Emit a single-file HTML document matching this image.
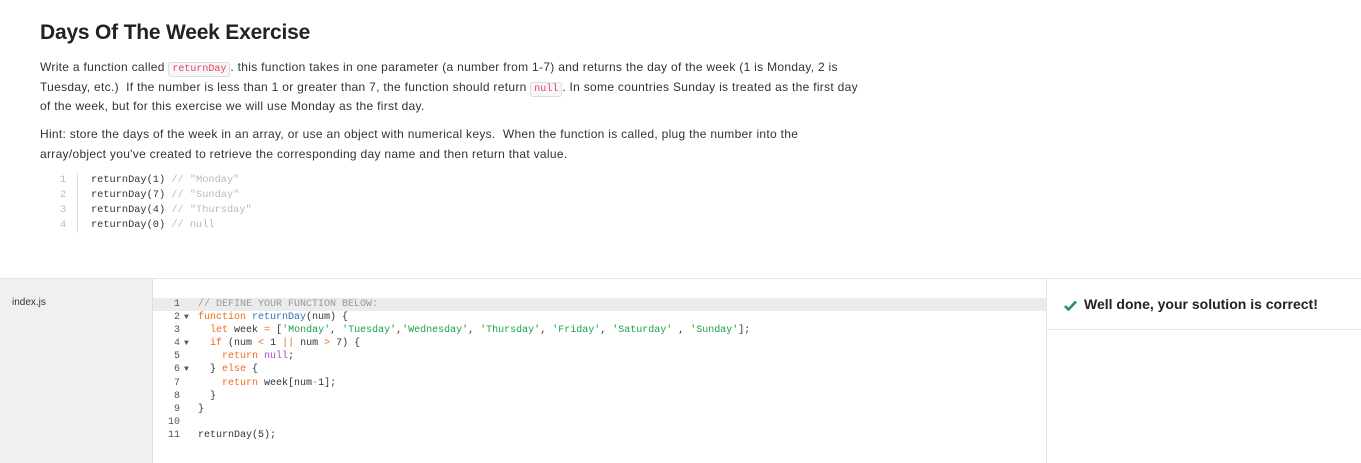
<!DOCTYPE html>
<html><head><style>
body{margin:0;width:1361px;height:462px;background:#fff;font-family:"Liberation Sans",sans-serif;color:#333;overflow:hidden;position:relative}
h1{position:absolute;left:40px;top:21px;margin:0;font-size:21px;font-weight:bold;color:#222;letter-spacing:-0.2px}
.p{position:absolute;left:40px;font-size:12px;line-height:19.5px;width:900px;white-space:nowrap;color:#333;letter-spacing:0.3px}
code.i{font-family:"Liberation Mono",monospace;font-size:10px;line-height:10px;color:#e83e5c;background:#f7f7f9;border:1px solid #ddd;border-radius:3px;padding:1px 3px;letter-spacing:0}
.ex{position:absolute;left:54px;top:173px;font-family:"Liberation Mono",monospace;font-size:10.3px;line-height:15px;color:#333}
.ex .n{display:inline-block;width:24px;color:#bbb;border-right:1px solid #ddd;margin-right:13px;text-align:left;padding-left:6px;box-sizing:border-box}
.c{color:#bbb}
.bot{position:absolute;left:0;top:278px;width:1361px;height:184px;border-top:1px solid #e5e5e5}
.left{position:absolute;left:0;top:0;width:152px;height:184px;background:#eff0f2;border-right:1px solid #e0e0e0}
.left span{position:absolute;left:12px;top:18px;font-size:10px;color:#333}
.ed{position:absolute;left:153px;top:19px;width:893px;font-family:"Liberation Mono",monospace;font-size:10px;line-height:13.1px;color:#333}
.ed div{white-space:pre;height:13.1px}
.ed .ln{display:inline-block;width:45px;text-align:right;color:#555;padding-right:18px;box-sizing:border-box;position:relative}
.ed .ln i{position:absolute;left:31px;top:0;font-style:normal;font-size:8px;color:#555}
.ed .hl{background:#ebebeb}
.k{color:#f26b1d}.f{color:#2f6fb5}.s{color:#1aa34a}.nl{color:#b146c2}.cm{color:#999}
.right{position:absolute;left:1046px;top:0;width:315px;height:184px;border-left:1px solid #e5e5e5}
.msg{position:absolute;left:0;top:0;width:315px;height:50px;border-bottom:1px solid #e5e5e5;font-weight:bold;font-size:14px;color:#222}
.msg span{position:absolute;left:37px;top:17px}
</style></head><body>
<h1>Days Of The Week Exercise</h1>
<div class="p" style="top:58px">Write a function called <code class="i">returnDay</code>. this function takes in one parameter (a number from 1-7) and returns the day of the week (1 is Monday, 2 is<br>Tuesday, etc.)&nbsp; If the number is less than 1 or greater than 7, the function should return <code class="i">null</code>. In some countries Sunday is treated as the first day<br>of the week, but for this exercise we will use Monday as the first day.</div>
<div class="p" style="top:125px">Hint: store the days of the week in an array, or use an object with numerical keys.&nbsp; When the function is called, plug the number into the<br>array/object you've created to retrieve the corresponding day name and then return that value.</div>
<div class="ex">
<div><span class="n">1</span>returnDay(1) <span class="c">// "Monday"</span></div>
<div><span class="n">2</span>returnDay(7) <span class="c">// "Sunday"</span></div>
<div><span class="n">3</span>returnDay(4) <span class="c">// "Thursday"</span></div>
<div><span class="n">4</span>returnDay(0) <span class="c">// null</span></div>
</div>
<div class="bot">
<div class="left"><span>index.js</span></div>
<div class="ed">
<div class="hl"><span class="ln">1</span><span class="cm">// DEFINE YOUR FUNCTION BELOW:</span></div>
<div><span class="ln">2<i>▼</i></span><span class="k">function</span> <span class="f">returnDay</span>(num) {</div>
<div><span class="ln">3</span>  <span class="k">let</span> week <span class="k">=</span> [<span class="s">'Monday'</span>, <span class="s">'Tuesday'</span>,<span class="s">'Wednesday'</span>, <span class="s">'Thursday'</span>, <span class="s">'Friday'</span>, <span class="s">'Saturday'</span> , <span class="s">'Sunday'</span>];</div>
<div><span class="ln">4<i>▼</i></span>  <span class="k">if</span> (num <span class="k">&lt;</span> 1 <span class="k">||</span> num <span class="k">&gt;</span> 7) {</div>
<div><span class="ln">5</span>    <span class="k">return</span> <span class="nl">null</span>;</div>
<div><span class="ln">6<i>▼</i></span>  } <span class="k">else</span> {</div>
<div><span class="ln">7</span>    <span class="k">return</span> week[num<span class="k">-</span>1];</div>
<div><span class="ln">8</span>  }</div>
<div><span class="ln">9</span>}</div>
<div><span class="ln">10</span></div>
<div><span class="ln">11</span>returnDay(5);</div>
</div>
<div class="right"><div class="msg"><svg style="position:absolute;left:17px;top:21px" width="13" height="11" viewBox="0 0 13 11"><path d="M1 6 L4.5 9.5 L12 1.5" stroke="#2e8a6a" stroke-width="2.6" fill="none"/></svg><span>Well done, your solution is correct!</span></div></div>
</div>
</body></html>
